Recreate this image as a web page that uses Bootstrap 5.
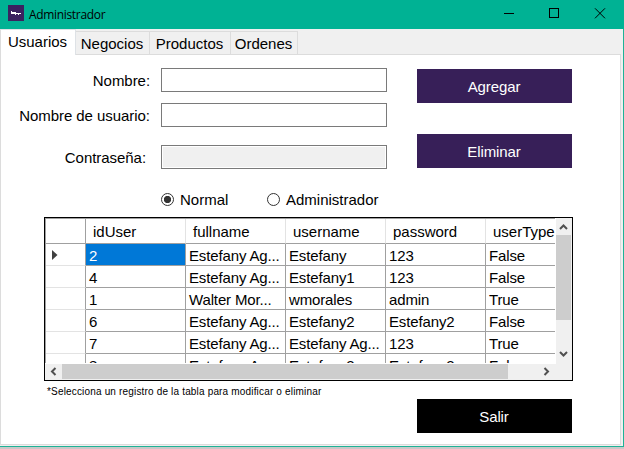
<!DOCTYPE html>
<html lang="es">
<head>
<meta charset="utf-8">
<meta name="viewport" content="width=device-width, initial-scale=1">
<title>Administrador</title>
<link href="https://cdn.jsdelivr.net/npm/bootstrap@5.3.0/dist/css/bootstrap.min.css" rel="stylesheet">
<style>
body{width:624px;height:449px;overflow:hidden;background:#c8c8c8;font-family:"Liberation Sans",Arial,sans-serif;font-size:15px;line-height:18px;color:#000}
.win{width:624px;height:447px;background:#f0f0f0;border-right:1px solid #1fb296;border-bottom:1px solid #1fb296}
.titlebar{height:29px;width:624px;background:#00b294;font-family:"Open Sans","Noto Sans",sans-serif;font-size:12px;padding-left:8px}
.titlebar .caption{margin-left:5px;letter-spacing:-.33px;line-height:27px;margin-top:-1px}
.logo{margin-top:-3px}
.caps svg{display:block}
.tabs.nav-tabs{height:25px;border:0;flex-wrap:nowrap;align-items:flex-end}
.tabs .nav-link{border:1px solid #dcdcdc;border-left:0;border-bottom:0;border-radius:0;background:#f0f0f0;color:#000;padding:3px 1px 0 0;height:23px;line-height:18px;text-align:center;margin:0;white-space:nowrap}
.tabs .nav-link.active{height:26px;width:76px;margin-bottom:-1px;background:#fff;border-left:1px solid #dcdcdc;padding-top:3px;position:relative;z-index:1;color:#000}
.t2{width:74px}.t3{width:81px}.t4{width:67px}
.panel{width:621px;height:391px;background:#fff;border:1px solid #dcdcdc}
.fields{width:387px;padding-top:13px}
.field{height:24px}
.field label{width:149px;margin-right:11px;text-align:right;line-height:25px;white-space:nowrap;letter-spacing:-.05px}
.field .form-control{width:226px;height:24px;border:1px solid #7a7a7a;border-radius:0;padding:0 3px;min-height:0;font-size:15px}
.field .form-control:disabled{background:#f0f0f0;box-shadow:inset 0 0 0 1px #fff}
.gap-a{margin-top:11px}.gap-b{margin-top:18px}
.radios{margin:21px 0 0 160px;height:18px}
.radios .form-check-input{width:13px;height:13px;flex:none;margin:0 6px 0 0;border:1px solid #333;background:#fff;float:none}
.radios .form-check-input:checked{background:radial-gradient(circle,#333 0 3.3px,#fff 4px)}
.radios label{line-height:18px;padding-top:2px}
.choice{width:106px;flex:none;white-space:nowrap}
.actions{margin-left:29px;padding-top:14px;gap:31px}
.action.btn{width:155px;height:34px;border:0;border-radius:0;background:#371f58;color:#fff;font-size:15px;line-height:18px;padding:2px 1px 0 0;letter-spacing:-.1px}
.action.exit{background:#000}
.formarea{height:162px}
.gridbox{width:529px;height:164px;margin-left:43px;border:1px solid #000;background:#fff}
.view{width:510px;height:145px;margin:0 1px 1px 0;overflow:hidden;border-top:1px solid #a0a0a0;border-left:1px solid #a0a0a0}
.data{table-layout:fixed;width:540px;border-collapse:separate;border-spacing:0}
.data th,.data td{font-weight:400;padding:2px 0 0 3px;height:22px;line-height:18px;border-right:1px solid #a0a0a0;border-bottom:1px solid #a0a0a0;white-space:nowrap;overflow:hidden;vertical-align:middle;letter-spacing:-.14px}
.data thead th{height:25px;border-right-color:#e3e3e3;padding:2px 0 0 7px;letter-spacing:0}
.data thead th:first-child{border-right-color:#a0a0a0}
.data tbody th{border-bottom-color:#e3e3e3;padding:0 0 0 6px}
.data tbody th svg{display:block}
.data td.sel{background:#0078d7;color:#fff}
.bar{background:#f0f0f0}
.vbar{width:16px;height:146px}
.hbar{height:16px}
.vthumb{height:85px;width:15px;background:#cdcdcd}
.hthumb{width:446px;height:15px;background:#cdcdcd}
.bar svg{display:block;flex:none}
.hint{font-size:10px;line-height:12px;letter-spacing:.17px;margin:5px 0 0 46px;height:13px;white-space:nowrap}
</style>
<script src="https://cdn.jsdelivr.net/npm/bootstrap@5.3.0/dist/js/bootstrap.bundle.min.js"></script>
</head>
<body>
<div class="win">
  <header class="titlebar d-flex align-items-center">
    <svg class="logo" width="16" height="16"><rect width="16" height="16" fill="#3b2260"/><path d="M3 6h1v1h4v1h5v1h-2v1h-1V9H8v1H7V9H3z" fill="#fff"/></svg>
    <span class="caption">Administrador</span>
    <div class="caps d-flex ms-auto">
      <svg width="138" height="29" fill="none" stroke="#000" shape-rendering="crispEdges"><path d="M18 13.500h10M63.500 8.500h9v9h-9z"/><path d="M109 8.300l10 10M119 8.300l-10 10" shape-rendering="auto"/></svg>
    </div>
  </header>
  <nav class="tabs nav nav-tabs">
    <a class="nav-link active">Usuarios</a>
    <a class="nav-link t2">Negocios</a>
    <a class="nav-link t3">Productos</a>
    <a class="nav-link t4">Ordenes</a>
  </nav>
  <main class="panel">
    <div class="formarea d-flex">
      <form class="fields">
        <div class="field d-flex"><label for="n">Nombre:</label><input id="n" class="form-control"></div>
        <div class="field d-flex gap-a"><label for="u">Nombre de usuario:</label><input id="u" class="form-control"></div>
        <div class="field d-flex gap-b"><label for="p" class="pe-1">Contraseña:</label><input id="p" class="form-control" disabled></div>
        <div class="radios d-flex">
          <div class="choice d-flex align-items-center"><input class="form-check-input" type="radio" name="r" id="r1" checked><label for="r1">Normal</label></div>
          <div class="choice d-flex align-items-center"><input class="form-check-input" type="radio" name="r" id="r2"><label for="r2">Administrador</label></div>
        </div>
      </form>
      <div class="actions d-flex flex-column">
        <button class="btn action">Agregar</button>
        <button class="btn action">Eliminar</button>
      </div>
    </div>
    <div class="gridbox">
      <div class="d-flex">
        <div class="view">
          <table class="data">
            <colgroup><col style="width:40px"><col style="width:100px"><col style="width:100px"><col style="width:100px"><col style="width:100px"><col style="width:100px"></colgroup>
            <thead><tr><th></th><th>idUser</th><th>fullname</th><th>username</th><th>password</th><th>userType</th></tr></thead>
            <tbody>
              <tr><th><svg width="6" height="10"><path d="M0 0l5.500 5L0 10z" fill="#404040"/></svg></th><td class="sel">2</td><td>Estefany Ag...</td><td>Estefany</td><td>123</td><td>False</td></tr>
              <tr><th></th><td>4</td><td>Estefany Ag...</td><td>Estefany1</td><td>123</td><td>False</td></tr>
              <tr><th></th><td>1</td><td>Walter Mor...</td><td>wmorales</td><td>admin</td><td>True</td></tr>
              <tr><th></th><td>6</td><td>Estefany Ag...</td><td>Estefany2</td><td>Estefany2</td><td>False</td></tr>
              <tr><th></th><td>7</td><td>Estefany Ag...</td><td>Estefany Ag...</td><td>123</td><td>True</td></tr>
              <tr><th></th><td>8</td><td>Estefany Ag...</td><td>Estefany2</td><td>Estefany2</td><td>False</td></tr>
            </tbody>
          </table>
        </div>
        <div class="bar vbar d-flex flex-column">
          <svg width="16" height="17"><path d="M4 11l3.500-3.500L11 11" fill="none" stroke="#505050" stroke-width="2"/></svg>
          <div class="vthumb"></div>
          <svg class="mt-auto" width="16" height="17"><path d="M4 5l3.500 3.500L11 5" fill="none" stroke="#505050" stroke-width="2"/></svg>
        </div>
      </div>
      <div class="bar hbar d-flex">
        <svg width="17" height="16"><path d="M10.500 4L7 7.500l3.500 3.500" fill="none" stroke="#505050" stroke-width="2"/></svg>
        <div class="hthumb"></div>
        <svg class="ms-auto me-3" width="17" height="16"><path d="M5.500 4L9 7.500 5.500 11" fill="none" stroke="#505050" stroke-width="2"/></svg>
      </div>
    </div>
    <div class="hint">*Selecciona un registro de la tabla para modificar o eliminar</div>
    <div class="d-flex justify-content-end pe-5"><button class="btn action exit">Salir</button></div>
  </main>
</div>
</body>
</html>
